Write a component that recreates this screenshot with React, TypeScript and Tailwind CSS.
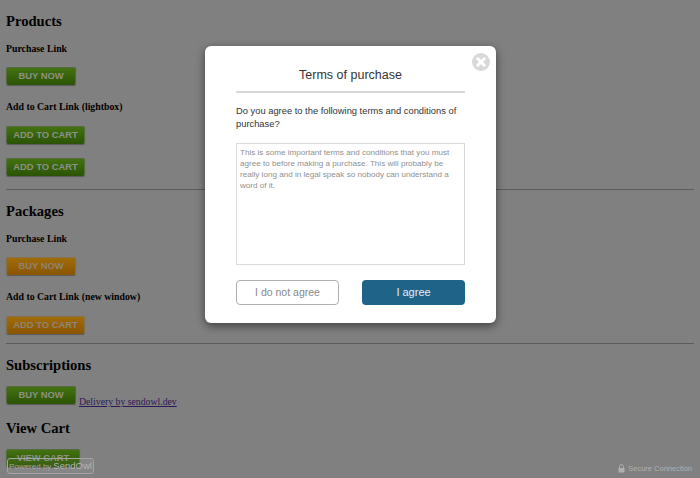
import React from "react";

const serif = "font-['Liberation_Serif',serif]";

function Btn({ label, w, color }: { label: string; w: string; color: "green" | "orange" }) {
  const c =
    color === "green"
      ? "bg-gradient-to-b from-[#437210] to-[#2b5306] border-[#566a40] text-[#8c9086]"
      : "bg-gradient-to-b from-[#a06c08] to-[#8a5504] border-[#85734f] text-[#8e8474]";
  return (
    <span
      className={`inline-flex h-[18px] items-center justify-center rounded-[2px] border-x border-t border-b-[#3a3a2a] font-['Liberation_Sans',sans-serif] text-[9.4px] font-bold shadow-[0_1px_1px_rgba(0,0,0,0.3)] ${w} ${c}`}
    >
      {label}
    </span>
  );
}

function H2({ children, className }: { children: React.ReactNode; className: string }) {
  return <h2 className={`text-[14.6px] leading-[18px] font-bold text-black ${className}`}>{children}</h2>;
}
function H3({ children, className }: { children: React.ReactNode; className: string }) {
  return <h3 className={`text-[9.8px] leading-[13px] font-bold text-black ${className}`}>{children}</h3>;
}

export default function App() {
  return (
    <div className={`relative h-[478px] w-[700px] overflow-hidden bg-[#808080] px-[6px] ${serif}`}>
      <H2 className="pt-[12px]">Products</H2>
      <H3 className="mt-[12px]">Purchase Link</H3>
      <div className="mt-[12px] flex"><Btn label="BUY NOW" w="w-[70px]" color="green" /></div>
      <H3 className="mt-[15px]">Add to Cart Link (lightbox)</H3>
      <div className="mt-[13px] flex"><Btn label="ADD TO CART" w="w-[79px]" color="green" /></div>
      <div className="mt-[14px] flex"><Btn label="ADD TO CART" w="w-[79px]" color="green" /></div>
      <div className="mt-[13px] h-px bg-[#5c5c5c]" />
      <H2 className="mt-[12px]">Packages</H2>
      <H3 className="mt-[12px]">Purchase Link</H3>
      <div className="mt-[12px] flex"><Btn label="BUY NOW" w="w-[70px]" color="orange" /></div>
      <H3 className="mt-[15px]">Add to Cart Link (new window)</H3>
      <div className="mt-[13px] flex"><Btn label="ADD TO CART" w="w-[79px]" color="orange" /></div>
      <div className="mt-[9px] h-px bg-[#5c5c5c]" />
      <H2 className="mt-[12px]">Subscriptions</H2>
      <div className="mt-[12px] flex items-end gap-[3px]">
        <Btn label="BUY NOW" w="w-[70px]" color="green" />
        <a className="mb-[-3px] text-[9.75px] leading-[11px] text-[#2c1a56] underline">Delivery by sendowl.dev</a>
      </div>
      <H2 className="mt-[15px]">View Cart</H2>
      <div className="mt-[12px] flex"><Btn label="VIEW CART" w="w-[74px]" color="green" /></div>

      <div className="absolute left-[7px] top-[458px] flex h-[16px] w-[87px] items-center justify-center gap-[2px] whitespace-nowrap rounded-[3px] border border-[#a4a4a4] bg-white/5 pt-[1px] font-['Liberation_Sans',sans-serif] text-[8px] text-[#a4a4a4]">
        <span>Powered by</span><span className="text-[9.5px] text-[#b4b4b4]">SendOwl</span>
      </div>
      <div className="absolute right-[8px] top-[463px] flex items-center gap-[3px] font-['Liberation_Sans',sans-serif] text-[7.5px] leading-[11px] text-[#b0b0b0]">
        <svg width="7" height="9" viewBox="0 0 7 9">
          <path d="M1.5 4V2.6a2 2 0 0 1 4 0V4" fill="none" stroke="#b0b0b0" strokeWidth="1" />
          <rect x="0.5" y="4" width="6" height="4.6" rx="0.6" fill="#b0b0b0" />
        </svg>
        Secure Connection
      </div>

      <div className="absolute left-[205px] top-[46px] h-[277px] w-[291px] rounded-[6px] bg-white px-[31px] font-['Liberation_Sans',sans-serif] shadow-[0_3px_10px_rgba(0,0,0,0.5)]">
        <div className="pt-[21px] text-center text-[12.5px] leading-[16px] text-[#333]">Terms of purchase</div>
        <div className="mt-[8px] h-[2px] bg-[#d8d8d8]" />
        <p className="mt-[12px] text-[9.35px] leading-[13px] text-[#333]">
          Do you agree to the following terms and conditions of purchase?
        </p>
        <div className="mt-[12px] h-[122px] border border-[#d9d9d9] px-[3px] py-[3px] text-[8.1px] leading-[11px] text-[#8f8f8f]">
          This is some important terms and conditions that you must agree to before making a purchase. This will probably be really long and in legal speak so nobody can understand a word of it.
        </div>
        <div className="mt-[15px] flex justify-between">
          <div className="flex h-[25px] w-[103px] items-center justify-center rounded-[4px] border border-[#b0b0b0] text-[10.5px] text-[#888]">I do not agree</div>
          <div className="flex h-[25px] w-[103px] items-center justify-center rounded-[4px] bg-[#1f6389] text-[11px] text-[#e4edf2]">I agree</div>
        </div>
        <svg className="absolute left-[267px] top-[7px]" width="18" height="18" viewBox="0 0 18 18">
          <circle cx="9" cy="9" r="9" fill="#d9d9d9" />
          <path d="M5.8 5.8l6.4 6.4M12.2 5.8l-6.4 6.4" stroke="#fff" strokeWidth="3" strokeLinecap="round" />
        </svg>
      </div>
    </div>
  );
}
